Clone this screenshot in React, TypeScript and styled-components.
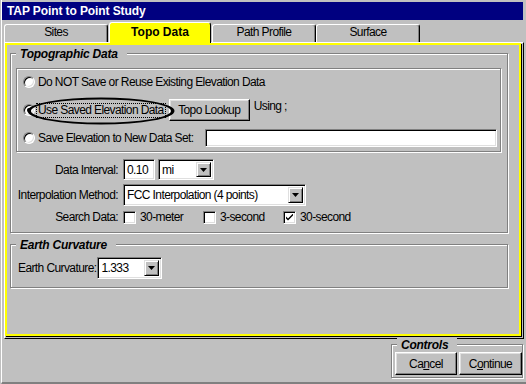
import React from "react";
import styled, { createGlobalStyle, css } from "styled-components";

const GlobalStyle = createGlobalStyle`
  html, body { margin: 0; padding: 0; background: #c0c0c0; }
  body {
    font-family: "Liberation Sans", Arial, sans-serif;
    font-size: 12px;
    letter-spacing: -0.6px;
    color: #000;
  }
  *, *::before, *::after { box-sizing: border-box; }
`;

const raised = css`
  border: 1px solid;
  border-color: #fff #000 #000 #fff;
  box-shadow: inset -1px -1px 0 #808080, inset 1px 1px 0 #dfdfdf;
  background: #c0c0c0;
`;

const sunken = css`
  border: 1px solid;
  border-color: #808080 #fff #fff #808080;
  box-shadow: inset 1px 1px 0 #000, inset -1px -1px 0 #dfdfdf;
  background: #fff;
`;

const Window = styled.div`
  width: 526px;
  height: 384px;
  padding-left: 1px;
  display: flex;
  background: #c0c0c0;
  overflow: hidden;
`;

const Frame = styled.div`
  flex: 1;
  display: flex;
  flex-direction: column;
  border-left: 1px solid #fff;
  border-bottom: 2px solid #808080;
  padding-top: 2px;
`;

const TitleBar = styled.div`
  height: 18px;
  margin-right: 3px;
  background: #000080;
  color: #fff;
  font-weight: bold;
  font-size: 12px;
  letter-spacing: -0.1px;
  line-height: 18px;
  padding-left: 5px;
`;

const TabRow = styled.div`
  display: flex;
  align-items: flex-end;
  height: 20px;
  margin-top: 2px;
  padding-left: 2px;
  position: relative;
  z-index: 1;
`;

const Tab = styled.div<{ $active?: boolean; $w: number; $mr?: number }>`
  width: ${(p) => p.$w}px;
  margin-right: ${(p) => p.$mr ?? 0}px;
  height: ${(p) => (p.$active ? 21 : 18)}px;
  margin-bottom: ${(p) => (p.$active ? -1 : 0)}px;
  padding-top: ${(p) => (p.$active ? 2 : 0)}px;
  background: ${(p) => (p.$active ? "#ffff00" : "#c0c0c0")};
  border-top: 1px solid #fff;
  border-left: 1px solid #fff;
  border-right: 1px solid #000;
  border-radius: 3px 3px 0 0;
  box-shadow: inset -1px 0 0 ${(p) => (p.$active ? "#ffff00" : "#808080")};
  text-align: center;
  font-weight: ${(p) => (p.$active ? "bold" : "normal")};
  letter-spacing: ${(p) => (p.$active ? "0" : "-0.6px")};
  line-height: 15px;
`;

const Panel = styled.div`
  height: 297px;
  margin: 0 2px;
  display: flex;
  border-top: 1px solid #fff;
  border-left: 1px solid #fff;
  border-right: 1px solid #000;
  border-bottom: 1px solid #000;
  padding: 0 2px 2px 0;
`;

const PanelInner = styled.div`
  flex: 1;
  border: 2px solid #ffff00;
  box-shadow: 1px 1px 0 #000;
  display: flex;
  flex-direction: column;
  padding: 8px 11px 0 3px;
`;

const GroupBox = styled.div<{ $mt?: number }>`
  position: relative;
  margin-top: ${(p) => p.$mt ?? 0}px;
  border: 1px solid #808080;
  box-shadow: 1px 1px 0 #fff, inset 1px 1px 0 #fff;
`;

const Legend = styled.span`
  position: absolute;
  top: -7px;
  left: 5px;
  padding: 0 9px 0 4px;
  background: #c0c0c0;
  font-weight: bold;
  font-style: italic;
  font-size: 12px;
  letter-spacing: -0.25px;
  line-height: 14px;
  white-space: nowrap;
`;

const TopoBody = styled.div`
  padding: 14px 6px 8px 5px;
  display: flex;
  flex-direction: column;
`;

const RadioBox = styled.div`
  height: 84px;
  border: 1px solid #808080;
  box-shadow: 1px 1px 0 #fff, inset 1px 1px 0 #fff;
  padding: 2px 0 0 6px;
  display: flex;
  flex-direction: column;
  gap: 6px;
`;

const RadioRow = styled.div`
  position: relative;
  height: 22px;
  display: flex;
  align-items: center;
  line-height: 14px;
`;

const Radio = styled.span<{ $checked?: boolean }>`
  position: relative;
  flex: none;
  width: 12px;
  height: 12px;
  border-radius: 50%;
  background: #fff;
  border: 1px solid;
  border-color: #808080 #fff #fff #808080;
  box-shadow: inset 1px 1px 0 #000, inset -1px -1px 0 #dfdfdf;
  ${(p) =>
    p.$checked &&
    css`
      &::after {
        content: "";
        position: absolute;
        left: 3px;
        top: 3px;
        width: 4px;
        height: 4px;
        border-radius: 50%;
        background: #000;
      }
    `}
`;

const RadioLabel = styled.span<{ $focus?: boolean }>`
  margin-left: ${(p) => (p.$focus ? 1 : 3)}px;
  white-space: nowrap;
  ${(p) =>
    p.$focus &&
    css`
      border: 1px dotted #000;
      padding: 0 1px;
      line-height: 13px;
    `}
`;

const Button = styled.button<{ $w: number; $h?: number }>`
  ${raised};
  width: ${(p) => p.$w}px;
  height: ${(p) => p.$h ?? 23}px;
  flex: none;
  padding: 0;
  font-family: "Liberation Sans", Arial, sans-serif;
  font-size: 12px;
  letter-spacing: -0.6px;
  color: #000;
  line-height: 14px;
`;

const UsingText = styled.span`
  align-self: flex-start;
  margin-left: 4px;
  line-height: 14px;
`;

const TextField = styled.div<{ $w: number; $h: number }>`
  ${sunken};
  flex: none;
  width: ${(p) => p.$w}px;
  height: ${(p) => p.$h}px;
  padding-left: 3px;
  display: flex;
  align-items: center;
`;

const NewSetField = styled(TextField)`
  margin-left: auto;
  margin-right: 3px;
`;

const Ellipse = styled.svg`
  position: absolute;
  left: 4px;
  top: -2px;
  pointer-events: none;
`;

const FormGrid = styled.div`
  margin-top: 7px;
  display: grid;
  grid-template-columns: 102px 1fr;
  column-gap: 5px;
  row-gap: 4px;
  align-items: center;
`;

const FieldLabel = styled.span`
  text-align: right;
  white-space: nowrap;
`;

const Controls = styled.div`
  display: flex;
  align-items: center;
  gap: 3px;
`;

const SelectBox = styled.div<{ $w: number; $h: number }>`
  ${sunken};
  flex: none;
  width: ${(p) => p.$w}px;
  height: ${(p) => p.$h}px;
  padding: 2px 2px 2px 3px;
  display: flex;
  align-items: center;
`;

const SelectValue = styled.span`
  flex: 1;
  white-space: nowrap;
  overflow: hidden;
`;

const ArrowButton = styled.span`
  ${raised};
  border-color: #dfdfdf #000 #000 #dfdfdf;
  box-shadow: inset 1px 1px 0 #fff, inset -1px -1px 0 #808080;
  flex: none;
  width: 15px;
  height: 100%;
  display: flex;
  align-items: center;
  justify-content: center;
`;

const Checks = styled.div`
  display: flex;
  align-items: center;
  height: 13px;
`;

const CheckItem = styled.label<{ $w?: number }>`
  display: flex;
  align-items: center;
  gap: 4px;
  width: ${(p) => (p.$w ? `${p.$w}px` : "auto")};
  white-space: nowrap;
`;

const CheckBox = styled.span`
  ${sunken};
  flex: none;
  width: 13px;
  height: 13px;
  display: flex;
  align-items: center;
  justify-content: center;
`;

const EarthBody = styled.div`
  padding: 12px 0 8px 7px;
  display: flex;
  align-items: center;
  gap: 1px;
`;

const Footer = styled.div`
  display: flex;
  justify-content: flex-end;
  margin-top: 5px;
  padding-right: 3px;
`;

const ControlsGroup = styled(GroupBox)`
  width: 132px;
  height: 34px;
  padding: 7px 0 0 3px;
  display: flex;
  gap: 2px;
`;

const Arrow = () => (
  <svg width="7" height="4" viewBox="0 0 7 4">
    <path d="M0 0H7L3.5 4Z" fill="#000" />
  </svg>
);

const Select = ({ w, h, value }: { w: number; h: number; value: string }) => (
  <SelectBox $w={w} $h={h}>
    <SelectValue>{value}</SelectValue>
    <ArrowButton>
      <Arrow />
    </ArrowButton>
  </SelectBox>
);

const Check = ({ label, checked, w }: { label: string; checked?: boolean; w?: number }) => (
  <CheckItem $w={w}>
    <CheckBox>
      {checked && (
        <svg width="7" height="7" viewBox="0 0 7 7">
          <path d="M0 2.5L0 4.5L2 6.5L7 1.5L7 -0.5L2 4.5Z" fill="#000" />
        </svg>
      )}
    </CheckBox>
    {label}
  </CheckItem>
);

export default function App() {
  return (
    <>
      <GlobalStyle />
      <Window>
        <Frame>
          <TitleBar>TAP Point to Point Study</TitleBar>
          <TabRow>
            <Tab $w={104} $mr={1}>Sites</Tab>
            <Tab $w={102} $mr={1} $active>
              Topo Data
            </Tab>
            <Tab $w={104}>Path Profile</Tab>
            <Tab $w={104}>Surface</Tab>
          </TabRow>
          <Panel>
            <PanelInner>
              <GroupBox>
                <Legend>Topographic Data</Legend>
                <TopoBody>
                  <RadioBox>
                    <RadioRow>
                      <Radio />
                      <RadioLabel>Do NOT Save or Reuse Existing Elevation Data</RadioLabel>
                    </RadioRow>
                    <RadioRow>
                      <Radio $checked />
                      <RadioLabel $focus>Use Saved Elevation Data</RadioLabel>
                      <Button $w={81} $h={22} style={{ marginLeft: 3 }}>
                        Topo Lookup
                      </Button>
                      <UsingText>Using ;</UsingText>
                      <Ellipse width="148" height="28" viewBox="0 0 148 28">
                        <path
                          fillRule="evenodd"
                          fill="#000"
                          d="M0.5 14a73.5 13.5 0 1 0 147 0a73.5 13.5 0 1 0 -147 0Z M4 14a70 11.6 0 1 0 140 0a70 11.6 0 1 0 -140 0Z"
                        />
                      </Ellipse>
                    </RadioRow>
                    <RadioRow>
                      <Radio />
                      <RadioLabel>Save Elevation to New Data Set:</RadioLabel>
                      <NewSetField $w={292} $h={18} />
                    </RadioRow>
                  </RadioBox>
                  <FormGrid>
                    <FieldLabel>Data Interval:</FieldLabel>
                    <Controls>
                      <TextField $w={32} $h={21}>0.10</TextField>
                      <Select w={56} h={21} value="mi" />
                    </Controls>
                    <FieldLabel>Interpolation Method:</FieldLabel>
                    <Controls>
                      <Select w={183} h={22} value="FCC Interpolation (4 points)" />
                    </Controls>
                    <FieldLabel>Search Data:</FieldLabel>
                    <Checks>
                      <Check label="30-meter" w={80} />
                      <Check label="3-second" w={80} />
                      <Check label="30-second" checked />
                    </Checks>
                  </FormGrid>
                </TopoBody>
              </GroupBox>
              <GroupBox $mt={11}>
                <Legend>Earth Curvature</Legend>
                <EarthBody>
                  <span>Earth Curvature:</span>
                  <Select w={65} h={22} value="1.333" />
                </EarthBody>
              </GroupBox>
            </PanelInner>
          </Panel>
          <Footer>
            <ControlsGroup>
              <Legend>Controls</Legend>
              <Button $w={62}>
                Ca<u>n</u>cel
              </Button>
              <Button $w={63}>
                C<u>o</u>ntinue
              </Button>
            </ControlsGroup>
          </Footer>
        </Frame>
      </Window>
    </>
  );
}
